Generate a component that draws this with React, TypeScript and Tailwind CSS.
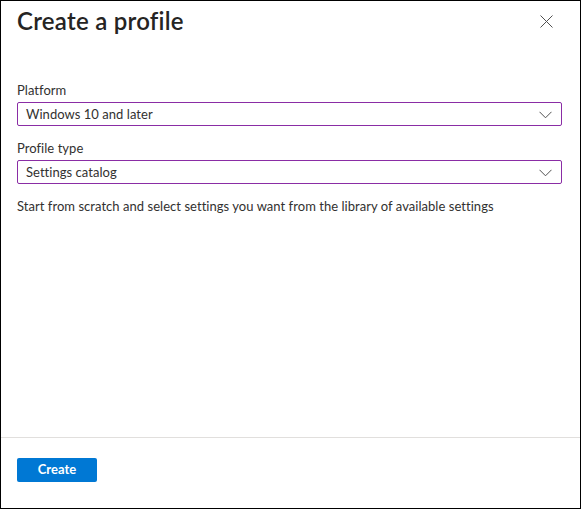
import React from "react";

const Chevron = () => (
  <svg className="mt-[2px]" width="13" height="8" viewBox="0 0 13 8" fill="none" stroke="#505050" strokeWidth="1">
    <path d="M0.5 0.8 L6.5 6.8 L12.5 0.8" />
  </svg>
);

const SelectField: React.FC<{ label: string; value: string }> = ({ label, value }) => (
  <div className="flex flex-col">
    <label className="h-[20px] text-[13px] leading-[20px] tracking-[0.04px] text-[#323130]">{label}</label>
    <div className="mt-[2px] flex h-[24px] items-center justify-between rounded-[2px] border border-[#8a2da5] pl-[8px] pr-[9px]">
      <span className="text-[13px] leading-[20px] tracking-[0.04px] text-[#323130]">{value}</span>
      <Chevron />
    </div>
  </div>
);

export default function App() {
  return (
    <div className="flex h-[509px] w-[581px] flex-col border border-black bg-white font-['Lato',sans-serif]">
      <div className="flex h-[79px] items-start justify-between pl-[16px] pr-[27px]">
        <h1 className="text-[24px] leading-[40px] font-semibold tracking-[0.25px] text-[#252423]">Create a profile</h1>
        <svg className="mt-[14px]" width="13" height="13" viewBox="0 0 13 13" fill="none" stroke="#505050" strokeWidth="1">
          <path d="M0.5 0.5 L12.5 12.5 M12.5 0.5 L0.5 12.5" />
        </svg>
      </div>
      <div className="flex flex-1 flex-col gap-[12px] pl-[16px] pr-[18px]">
        <SelectField label="Platform" value="Windows 10 and later" />
        <SelectField label="Profile type" value="Settings catalog" />
        <p className="text-[13px] leading-[20px] tracking-[0.04px] text-[#323130]">
          Start from scratch and select settings you want from the library of available settings
        </p>
      </div>
      <div className="flex h-[71px] items-start border-t border-[#e1dfdd] pl-[16px] pt-[20px]">
        <button className="h-[24px] w-[80px] rounded-[2px] bg-[#0078d4] text-[13px] font-bold text-white">
          Create
        </button>
      </div>
    </div>
  );
}
